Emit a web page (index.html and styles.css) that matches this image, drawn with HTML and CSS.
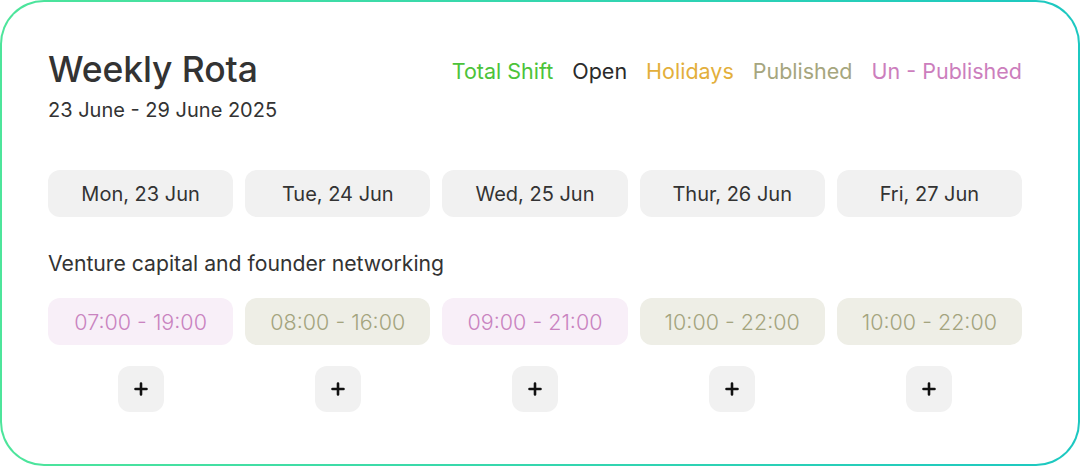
FILE: index.html
```html
<!DOCTYPE html>
<html>
<head>
<meta charset="utf-8">
<link rel="stylesheet" href="styles.css">
</head>
<body>
<div class="card">
  <div class="header">
    <div class="titles">
      <h1 class="title">Weekly Rota</h1>
      <div class="range">23 June - 29 June 2025</div>
    </div>
    <div class="legend">
      <span class="lg-total">Total Shift</span>
      <span class="lg-open">Open</span>
      <span class="lg-hol">Holidays</span>
      <span class="lg-pub">Published</span>
      <span class="lg-unpub">Un - Published</span>
    </div>
  </div>
  <div class="grid days">
    <div class="day">Mon, 23 Jun</div>
    <div class="day">Tue, 24 Jun</div>
    <div class="day">Wed, 25 Jun</div>
    <div class="day">Thur, 26 Jun</div>
    <div class="day">Fri, 27 Jun</div>
  </div>
  <div class="section">Venture capital and founder networking</div>
  <div class="grid shifts">
    <div class="shift unpub">07:00 - 19:00</div>
    <div class="shift pub">08:00 - 16:00</div>
    <div class="shift unpub">09:00 - 21:00</div>
    <div class="shift pub">10:00 - 22:00</div>
    <div class="shift pub">10:00 - 22:00</div>
  </div>
  <div class="grid adds">
    <div class="addcell"><button class="add"><svg width="14" height="14" viewBox="0 0 14 14"><path d="M7 1.5v11M1.5 7h11" stroke="#111" stroke-width="2.6" stroke-linecap="round"/></svg></button></div>
    <div class="addcell"><button class="add"><svg width="14" height="14" viewBox="0 0 14 14"><path d="M7 1.5v11M1.5 7h11" stroke="#111" stroke-width="2.6" stroke-linecap="round"/></svg></button></div>
    <div class="addcell"><button class="add"><svg width="14" height="14" viewBox="0 0 14 14"><path d="M7 1.5v11M1.5 7h11" stroke="#111" stroke-width="2.6" stroke-linecap="round"/></svg></button></div>
    <div class="addcell"><button class="add"><svg width="14" height="14" viewBox="0 0 14 14"><path d="M7 1.5v11M1.5 7h11" stroke="#111" stroke-width="2.6" stroke-linecap="round"/></svg></button></div>
    <div class="addcell"><button class="add"><svg width="14" height="14" viewBox="0 0 14 14"><path d="M7 1.5v11M1.5 7h11" stroke="#111" stroke-width="2.6" stroke-linecap="round"/></svg></button></div>
  </div>
</div>
</body>
</html>
```
FILE: styles.css
```css
* { box-sizing: border-box; }
html, body { margin: 0; padding: 0; background: #fff; }
body { width: 1080px; height: 466px; font-family: Inter, "Open Sans", sans-serif; color: #333; }
.card {
  width: 1080px; height: 466px;
  border: 2px solid transparent;
  border-radius: 44px;
  background: linear-gradient(#fff, #fff) padding-box, linear-gradient(90deg, #4de59b, #1cc8c1) border-box;
  padding: 46px 56px 0 46px;
}
.header { display: flex; justify-content: space-between; align-items: flex-start; height: 77px; }
.title { margin: 0; font-size: 35.5px; font-weight: 500; line-height: 44px; color: #333; letter-spacing: -0.1px; }
.range { font-size: 20px; line-height: 24px; margin-top: 6px; color: #333; }
.legend { display: flex; gap: 19px; font-size: 21.5px; line-height: 26px; padding-top: 10px; }
.lg-total { color: #4cc33a; }
.lg-open { color: #2a2a2a; }
.lg-hol { color: #e3af3b; }
.lg-pub { color: #a6a67e; }
.lg-unpub { color: #cc7ebd; }
.grid { display: grid; grid-template-columns: repeat(5, 1fr); column-gap: 12px; }
.days { margin-top: 45px; }
.day {
  height: 47px; border-radius: 12px; background: #f1f1f1;
  display: flex; align-items: center; justify-content: center;
  font-size: 20px; color: #333;
}
.section { margin-top: 33px; font-size: 21.2px; line-height: 26px; color: #333; }
.shifts { margin-top: 22px; }
.shift {
  height: 47px; border-radius: 12px;
  display: flex; align-items: center; justify-content: center;
  font-size: 21.5px; font-weight: 300;
}
.shift.unpub { background: #f8eff8; color: #c983c0; }
.shift.pub { background: #eeeee6; color: #a4a47e; }
.adds { margin-top: 21px; }
.addcell { display: flex; justify-content: center; }
.add {
  width: 46px; height: 46px; border: 0; border-radius: 12px; background: #f1f1f1;
  display: flex; align-items: center; justify-content: center; padding: 0;
}
```
